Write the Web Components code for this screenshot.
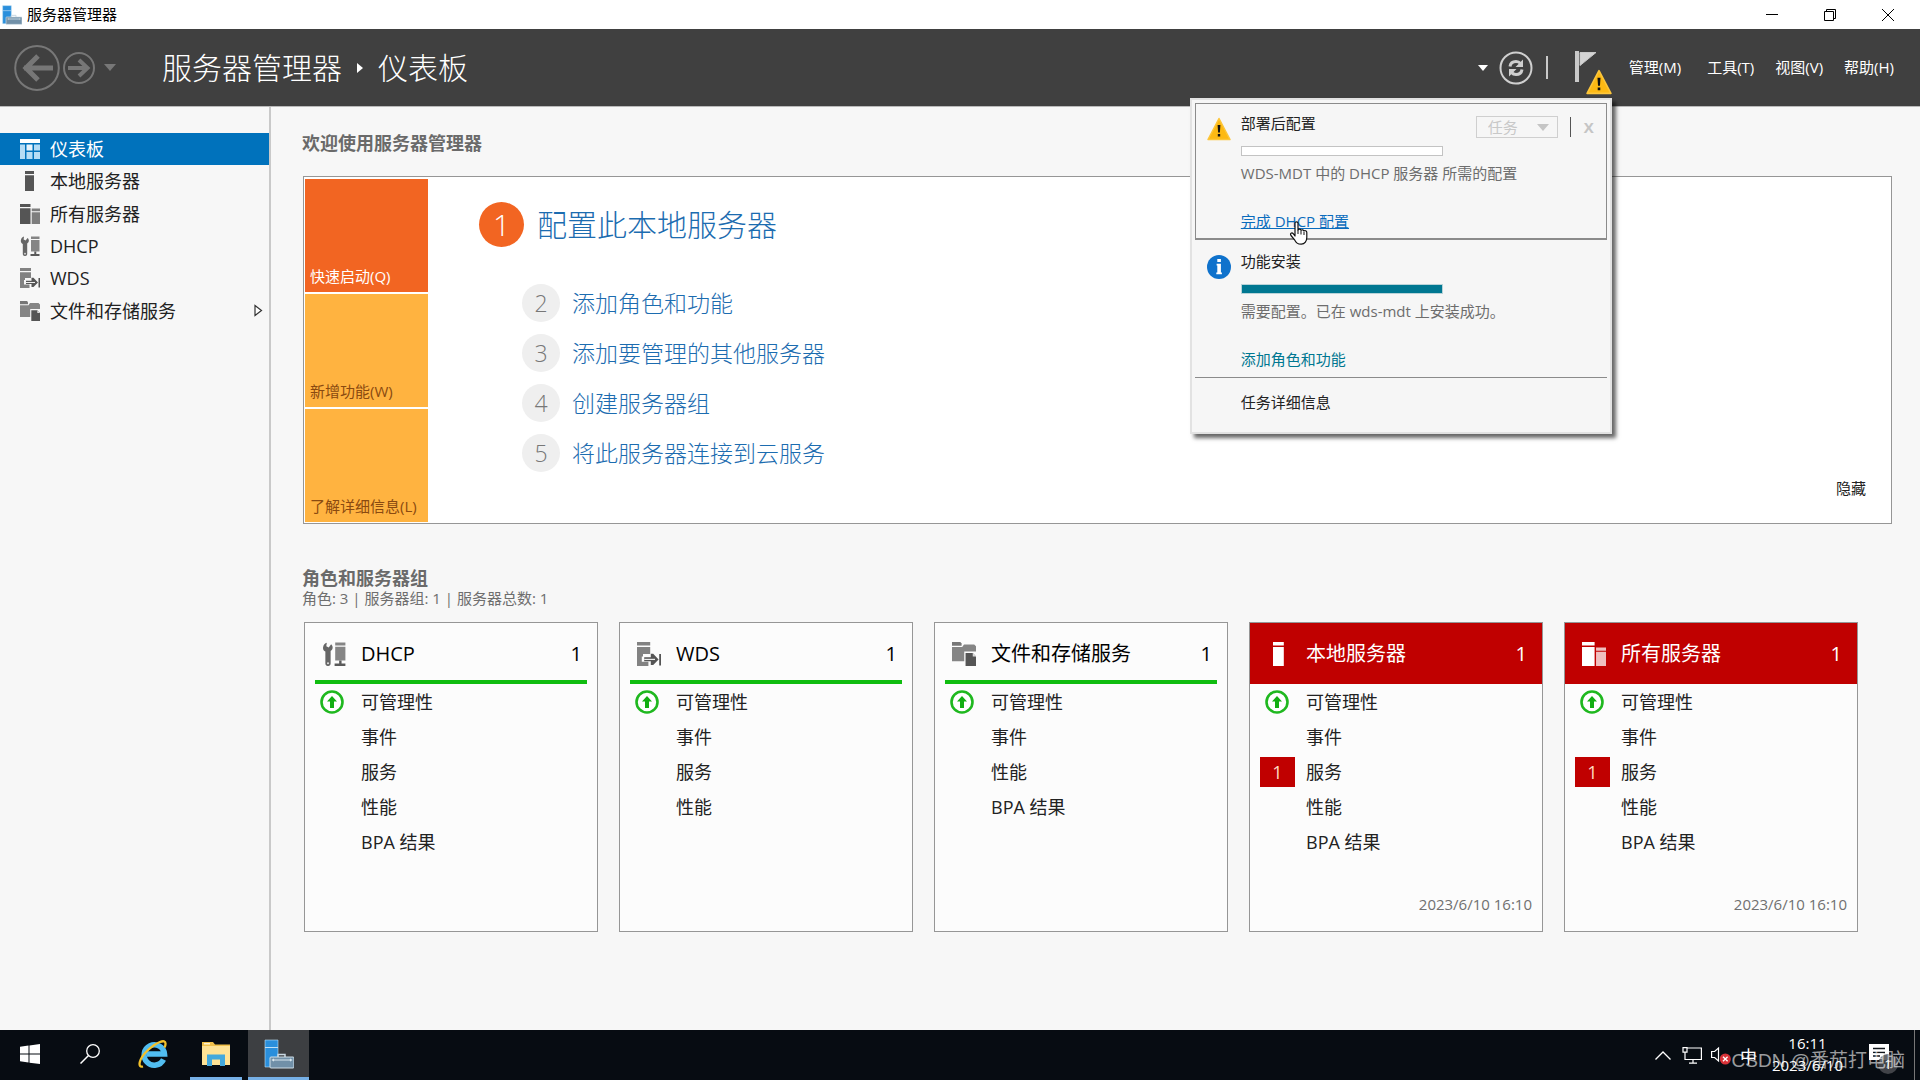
<!DOCTYPE html>
<html lang="zh-CN">
<head>
<meta charset="utf-8">
<title>服务器管理器</title>
<style>
  html, body { margin: 0; height: 100%; }
  body { font-family: "Open Sans", "Noto Sans CJK SC", sans-serif; background: #f7f7f7; color: #222; overflow: hidden; }
</style>
</head>
<body>
<sm-app></sm-app>
<script>
const BASE = `
  * { box-sizing: border-box; }
  a { color: inherit; text-decoration: none; }
  ul, ol { list-style: none; margin: 0; padding: 0; }
  h1, h2, p { margin: 0; font-weight: 400; }
  button, select { font: inherit; color: inherit; background: none; border: 0; padding: 0; margin: 0; border-radius: 0; }
`;
function define(name, render) {
  customElements.define(name, class extends HTMLElement {
    constructor() { super(); this.attachShadow({ mode: 'open' }); }
    connectedCallback() {
      const t = document.createElement('template');
      const [css, html] = render(this);
      t.innerHTML = `<style>${BASE}${css}</style>${html}`;
      this.shadowRoot.replaceChildren(t.content.cloneNode(true));
    }
  });
}

const ICONS = {
  app: [30, 30, `<path fill="#2a8fdc" stroke="#bfe0f6" stroke-width=".6" d="M1 1h13v27H1z"/><path stroke="#bfe0f6" d="M1 8.500h13"/><path fill="none" stroke="#c9d8e2" stroke-width="1.500" d="M14 18v-2.500h7V18"/><rect x="6" y="18" width="24" height="11" rx="1" fill="#7190a8" stroke="#cfdde6"/><path stroke="#d9e6ee" stroke-width="1.200" d="M9 21h18M10 20l-1.500 1L10 22M26 20l1.500 1L26 22"/>`],
  dash: [20, 20, `<path fill="#fff" d="M0 0h20v4H0z"/><path fill="#b5dcf5" d="M0 5.500h5V20H0z"/><path fill="#e8f4fc" d="M6.500 5.500h6v6h-6z"/><path fill="#b5dcf5" d="M14 5.500h6v6h-6zM6.500 13h6v7h-6zM14 13h6v7h-6z"/>`],
  server: [20, 20, `<path fill="currentColor" d="M5 0h9v3H5zM5 4.200h9V20H5z"/>`],
  servers: [20, 20, `<path fill="currentColor" d="M0 0h10.500v3H0zM0 4.200h10.500V20H0z"/><path fill="currentColor" opacity=".75" d="M11.700 4.600H20v2.600h-8.300zM11.700 8.200H20V20h-8.300z"/>`],
  dhcp: [20, 20, `<path fill="#666" d="M4 .6 3.600 3.500 5.600 4.600 7.600 1.900C9.400 3.400 9.300 6.300 7.200 7.500V18c0 2.700-4.400 2.700-4.400 0V8C1.400 7.400.6 6 .9 4.300 1.200 2.300 2.400 1 4 .6z"/><circle cx="5" cy="17.700" r=".9" fill="#ddd"/><path fill="#858585" d="M11 .500h8.500v2.500H11zM11 4h8.500v11.500H11z"/><path fill="#5a5a5a" d="M14.300 15.500h2V18h3.200v2H10.500v-2h3.800z"/>`],
  wds: [20, 20, `<path fill="#828282" d="M0 0h11v3H0zM0 4.200h11V10H0z"/><path fill="#828282" d="M0 9h5v3H4v4.500h5.500V20H0z"/><path fill="#555" d="M6 12.800h5.500V9.800h2l4.500 4.700-4.500 4.600h-2v-3H6zM18.500 10H20v9.500h-1.500z"/><path stroke="#eee" stroke-width="1" d="M6 14.500h9"/>`],
  files: [20, 20, `<path fill="#777" d="M0 0h7l1 1.200v2H0z"/><path fill="#858585" d="M0 4.200h8.500L10 2h8.500L20 3.500V8h-9.800v8H0z"/><path fill="#555" d="M11.300 9.200h6L20 12v8h-8.700z"/><path fill="#ddd" d="M17.300 9.200 20 12h-2.700z"/>`],
  up: [24, 24, `<circle cx="12" cy="12" r="10.500" fill="#fff" stroke="#1fb81f" stroke-width="2.600"/><path fill="#12ae12" d="M12 6l5 5.500h-3V18h-4v-6.500H7z"/>`],
  warn: [24, 24, `<path fill="#fdb913" stroke="#fdc63a" stroke-width="1.500" stroke-linejoin="round" d="M12 1.500 23 22.500H1z"/><path fill="#111" d="M10.600 8h2.800l-.5 7.500h-1.800zM10.800 17h2.400v2.500h-2.400z"/>`],
  info: [24, 24, `<circle cx="12" cy="12" r="12" fill="#0f72cc"/><path fill="#fff" d="M10.300 4h3.600v3h-3.600zM9.600 8.800h4.300v8.700h1v1.800H9.300v-1.800h1v-6.900h-.7z"/>`],
  back: [46, 48, `<ellipse cx="23" cy="24" rx="21.800" ry="22" fill="none" stroke="#777" stroke-width="2"/><path fill="none" stroke="#777" stroke-width="5" d="M10 24h29M24 12 12 24l12 12"/>`],
  fwd: [32, 32, `<circle cx="16" cy="16" r="15" fill="none" stroke="#777" stroke-width="2"/><path fill="none" stroke="#777" stroke-width="4" d="M5 16h20M16 8l8.500 8L16 24"/>`],
  refresh: [34, 34, `<circle cx="17" cy="17" r="15.500" fill="none" stroke="#cfcfcf" stroke-width="2"/><path fill="none" stroke="#cfcfcf" stroke-width="3" d="M11 15.500c.5-3.500 2.500-5 6-5 2 0 3.300.6 4.500 2M23 18.500c-.5 3.500-2.500 5-6 5-2 0-3.300-.6-4.500-2"/><path fill="#cfcfcf" d="M24 8.500v7.500h-7.500zM10 25.500V18h7.500z"/>`],
  flag: [24, 31, `<path fill="#c9c9c9" d="M1 0h4v31H1z"/><path fill="#d4d4d4" stroke="#c9c9c9" d="M6 1.500h16L6 14.500z"/><path stroke="#777" d="M5.500 3v10"/>`],
  down: [12, 7, `<path fill="currentColor" d="M0 0h12L6 7z"/>`],
  crumb: [6, 10, `<path fill="#fff" d="M0 0v10l6-5z"/>`],
  tri: [9, 13, `<path fill="#fff" stroke="#333" stroke-width="1.200" d="M1 1.500v10l6.500-5z"/>`],
  min: [12, 12, `<path stroke="#000" d="M0 5.500h12"/>`],
  max: [12, 12, `<path fill="none" stroke="#000" d="M.5 2.500h9v9h-9zM2.500 2V.500h9v9H10"/>`],
  close: [12, 12, `<path stroke="#000" d="M0 0l12 12M12 0 0 12"/>`],
  win: [20, 20, `<path fill="#fff" d="M0 2.800 8.500 1.600v8H0zM9.500 1.400 20 0v9.600H9.500zM0 10.500h8.500v8L0 17.300zM9.500 10.500H20V20L9.500 18.700z"/>`],
  search: [20, 20, `<circle cx="13" cy="7" r="6.300" fill="none" stroke="#fff" stroke-width="1.300"/><path stroke="#fff" stroke-width="1.500" d="M8.500 11.500.5 19.500"/>`],
  ie: [30, 30, `<path fill="none" stroke="#51bdf0" stroke-width="5.500" d="M25.500 20.500a10.200 10.200 0 1 1 1-5.500H9"/><path fill="none" stroke="#f3c22b" stroke-width="2.300" d="M5 27.500c-6 1.500-4-8 4.500-16S28-1 27.500 5c0 1-.3 2.300-1 3.500"/>`],
  folder: [28, 24, `<path fill="#f2c14b" d="M0 0h11l2 2.500h15V6H0z"/><path fill="#ffe395" d="M0 4h28v19H0z"/><path fill="#fff4cf" d="M2 1h6v1.500H2z"/><path fill="#43a9dc" d="M5 24V12.500h18V24h-5v-6.500h-8V24z"/>`],
  chev: [16, 9, `<path fill="none" stroke="#fff" stroke-width="1.300" d="m.5 8.500 7.500-7.500 7.500 7.500"/>`],
  net: [20, 17, `<path fill="none" stroke="#fff" stroke-width="1.200" d="M5 1h14.400v11.500H3V7M11 12.500V16M7 16.200h8M1 .600h4v4.500H1zM3 5v3"/>`],
  mute: [20, 20, `<path fill="none" stroke="#fff" stroke-width="1.200" d="M.6 6.500h3L7.500 3v13l-3.900-3.500h-3z"/><circle cx="14.300" cy="14" r="5.500" fill="#d83238"/><path stroke="#fff" stroke-width="1.300" d="m12 11.700 4.600 4.600m0-4.600L12 16.300"/>`],
  note: [20, 19, `<path fill="#fff" d="M0 0h20v16h-6l-3 3v-3H0z"/><path stroke="#10151b" stroke-width="1.400" d="M4 4.500h12M4 8.500h12M4 12h7"/>`],
  hand: [19, 24, `<path fill="#fff" stroke="#111" stroke-width="1.200" stroke-linejoin="round" d="M6 15V2.300C6 .300 9 .300 9 2.300V9c.5-1.300 2.700-1.200 3 .4.6-1 2.600-.8 2.800.6.900-.8 3-.3 3 1.500v5c0 3.500-2 6.700-5.500 6.700-4 0-5-1.500-6.500-4L2 14.500c-1.500-2.300 1-3.300 2.200-1.800z"/><path stroke="#111" d="M9 9v4M12 10v3.500M15 11v3"/>`]
};
define('sm-icon', el => {
  const [w, h, body] = ICONS[el.getAttribute('name')];
  const size = +el.getAttribute('width') || w;
  return [`:host { display: inline-block; flex: none; line-height: 0; } svg { display: block; }`,
    `<svg width="${size}" height="${Math.round(size * h / w)}" viewBox="0 0 ${w} ${h}" aria-hidden="true">${body}</svg>`];
});

define('sm-titlebar', () => [`
  :host { display: flex; align-items: center; height: 29px; flex: none; background: #fff; color: #000; padding: 0 3px 0 2px; font-size: 15px; }
  span { margin-left: 5px; line-height: 20px; padding-bottom: 2px; }
  nav { margin-left: auto; display: flex; align-self: stretch; }
  button { width: 58px; display: grid; place-items: center; }
`, `<sm-icon name="app" width="20"></sm-icon><span>服务器管理器</span>
  <nav><button aria-label="最小化"><sm-icon name="min"></sm-icon></button><button aria-label="还原"><sm-icon name="max"></sm-icon></button><button aria-label="关闭"><sm-icon name="close"></sm-icon></button></nav>`]);

define('sm-task', el => {
  const warn = el.hasAttribute('active');
  return [`
  :host { display: flex; height: 137px; padding: 10px 11px 0; border: 1px solid transparent; font-size: 15px; line-height: 20px; }
  :host([active]) { border-color: #8b8b8b; border-bottom-width: 2px; padding-top: 9px; }
  .body { flex: 1; min-width: 0; margin-left: 10px; display: flex; flex-direction: column; color: #6d6d6d; }
  .icon { margin-top: 4px; height: 24px; }
  .bar { width: 202px; height: 10px; border: 1px solid #c3c3c3; background: #fff; margin: 13px 0 7px; }
  .bar.full { background: #007791; border-color: #b9d3d8; }
  .title { color: #222; }
  .link { margin-top: 28px; }
  .tools { display: flex; align-items: center; gap: 12px; color: #c5c5c5; height: 22px; margin-top: 3px; }
  .pick { position: relative; display: flex; }
  .pick sm-icon { position: absolute; right: 9px; top: 8px; pointer-events: none; }
  select { appearance: none; width: 82px; height: 22px; border: 1px solid #cfcfcf; padding-left: 11px; color: #c8c8c8; opacity: 1; line-height: 20px; }
  i { width: 1px; height: 20px; background: #555; }
  .x { font-weight: 700; width: 12px; }
  `, `<sm-icon class="icon" name="${warn ? 'warn' : 'info'}"></sm-icon>
  <div class="body"><div class="title"><slot name="title"></slot></div><div class="bar${warn ? '' : ' full'}" role="progressbar" aria-label="进度"></div><slot name="text"></slot><div class="link"><slot name="link"></slot></div></div>
  ${warn ? `<div class="tools"><div class="pick"><select aria-label="任务" disabled><option>任务</option></select><sm-icon name="down"></sm-icon></div><i></i><button class="x" aria-label="关闭">X</button></div>` : ''}`];
});

define('sm-notices', () => [`
  :host { display: block; width: 422px; background: #f6f6f6; border: 2px solid #e2e2e2; padding: 3px; box-shadow: 4px 4px 4px rgba(0,0,0,.6); white-space: nowrap; color: #222; }
  .details { display: block; border-top: 1px solid #8b8b8b; padding: 14px 0 17px 46px; font-size: 15px; line-height: 20px; }
  .link { color: #007791; }
  .hot { position: relative; }
  .hot a { color: #0a6cbd; text-decoration: underline; }
  .hot sm-icon { position: absolute; left: 48px; top: 10px; z-index: 1; }
`, `<sm-task active><span slot="title">部署后配置</span><span slot="text">WDS-MDT 中的 DHCP 服务器 所需的配置</span><span slot="link" class="hot"><a href="#dhcp">完成 DHCP 配置</a><sm-icon name="hand"></sm-icon></span></sm-task>
  <sm-task><span slot="title">功能安装</span><span slot="text">需要配置。已在 wds-mdt 上安装成功。</span><a slot="link" class="link" href="#roles">添加角色和功能</a></sm-task>
  <a class="details" href="#details">任务详细信息</a>`]);

define('sm-header', () => [`
  :host { display: flex; align-items: center; height: 78px; flex: none; background: #404040; color: #fff; border-bottom: 1px solid #b9b9b9; padding: 0 26px 0 14px; }
  button { display: grid; place-items: center; }
  .nav { display: flex; align-items: center; gap: 3px; color: #777; }
  .nav .more { margin-left: 6px; }
  h1 { display: flex; align-items: center; gap: 15px; margin-left: 46px; font-size: 30px; line-height: 40px; font-weight: 300; }
  .right { margin-left: auto; display: flex; align-items: center; font-size: 15px; line-height: 20px; }
  .right i { width: 2px; height: 23px; background: #c9c9c9; margin: 0 26px 0 13px; }
  .drop { width: 10px; margin-right: 11px; }
  .flag { position: relative; width: 38px; height: 34px; margin-right: 17px; }
  .flag .warn { position: absolute; left: 12px; top: 18px; }
  sm-notices { position: absolute; right: 0; top: 47px; z-index: 5; }
  menu { display: flex; gap: 21px; margin: 0; padding: 0 0 2px; }
  menu button:first-child { margin-right: 5px; }
`, `<div class="nav"><button aria-label="后退"><sm-icon name="back"></sm-icon></button><button aria-label="前进"><sm-icon name="fwd"></sm-icon></button><button class="more" aria-label="历史"><sm-icon name="down"></sm-icon></button></div>
  <h1><span>服务器管理器</span><sm-icon name="crumb"></sm-icon><span>仪表板</span></h1>
  <div class="right"><button class="drop" aria-label="更多"><sm-icon name="down" width="10"></sm-icon></button><button aria-label="刷新"><sm-icon name="refresh"></sm-icon></button><i></i>
  <div class="flag"><button aria-label="通知"><sm-icon name="flag"></sm-icon><sm-icon class="warn" name="warn" width="26"></sm-icon></button><sm-notices></sm-notices></div>
  <menu><button>管理(M)</button><button>工具(T)</button><button>视图(V)</button><button>帮助(H)</button></menu></div>`]);

const NAV = [['dash', '仪表板'], ['server', '本地服务器'], ['servers', '所有服务器'], ['dhcp', 'DHCP'], ['wds', 'WDS'], ['files', '文件和存储服务']];
define('sm-sidebar', () => [`
  :host { display: block; width: 271px; flex: none; border-right: 2px solid #c9c9c9; padding-top: 26px; background: #f7f7f7; }
  ul { display: grid; grid-template-rows: repeat(6, 1fr); height: 194px; }
  a { display: flex; align-items: center; gap: 10px; height: 100%; padding: 0 6px 0 20px; font-size: 18px; line-height: 24px; }
  a > sm-icon:first-child { color: #555; }
  a[aria-current] { background: #0072bc; color: #fff; }
  .tri { margin-left: auto; }
`, `<ul>${NAV.map(([i, t], n) => `<li><a href="#${i}"${n ? '' : ' aria-current="page"'}><sm-icon name="${i}"></sm-icon><span>${t}</span>${n === 5 ? '<sm-icon class="tri" name="tri"></sm-icon>' : ''}</a></li>`).join('')}</ul>`]);

define('sm-welcome', () => [`
  :host { display: flex; background: #fff; border: 1px solid #969696; padding: 2px 20px 1px 1px; }
  .tiles { display: flex; flex-direction: column; gap: 2px; width: 123px; font-size: 15px; line-height: 20px; }
  .tiles button { height: 113px; display: flex; align-items: flex-end; padding: 0 0 6px 5px; background: #ffb340; color: #8a4a10; }
  .tiles button:first-child { background: #f26522; color: #fff; }
  .steps { margin: 23px 0 0 51px; color: #1c6cb0; font-weight: 300; flex: 1; }
  .steps a { display: flex; align-items: center; }
  b { font-weight: 300; display: grid; place-items: center; border-radius: 50%; width: 38px; height: 38px; background: #efefef; color: #777; }
  .first { font-size: 30px; line-height: 44px; gap: 13px; }
  .first b { width: 45px; height: 45px; background: #f26522; color: #fff; }
  ol { margin: 37px 0 0 43px; display: flex; flex-direction: column; gap: 12px; }
  ol a { font-size: 23px; line-height: 38px; gap: 12px; }
  .hide { align-self: flex-end; font-size: 15px; line-height: 20px; margin: 0 5px 24px 0; }
`, `<div class="tiles"><button>快速启动(Q)</button><button>新增功能(W)</button><button>了解详细信息(L)</button></div>
  <div class="steps"><a class="first" href="#local"><b>1</b><span>配置此本地服务器</span></a>
  <ol>${['添加角色和功能', '添加要管理的其他服务器', '创建服务器组', '将此服务器连接到云服务'].map((t, i) => `<li><a href="#s${i}"><b>${i + 2}</b><span>${t}</span></a></li>`).join('')}</ol></div>
  <button class="hide">隐藏</button>`]);

define('sm-card', el => {
  const alert = el.hasAttribute('alert');
  const rows = el.getAttribute('rows').split(',');
  return [`
  :host { display: flex; flex-direction: column; flex: 0 0 294px; height: 310px; border: 1px solid #969696; background: #fcfcfc; }
  header { display: flex; align-items: center; height: 61px; margin: 0 10px; border-bottom: 4px solid #10bd10; padding: 4px 5px 0 7px; font-size: 20px; line-height: 28px; color: #000; }
  :host([alert]) header { background: #c00000; color: #fff; margin: 0; padding: 1px 15px 0 17px; border: 0; }
  header sm-icon { width: 24px; margin-right: 15px; }
  header h2 { font-size: 20px; flex: 1; }
  li { display: flex; align-items: center; height: 35px; padding-left: 10px; font-size: 18px; line-height: 24px; }
  .mark { width: 35px; height: 30px; display: grid; place-items: center; margin-right: 11px; }
  .mark.ok { padding-right: 2px; }
  .mark.n { background: #c00000; color: #ffd9c0; }
  time { margin: auto 10px 17px auto; font-size: 15px; line-height: 20px; color: #707070; }
  `, `<header><sm-icon name="${el.getAttribute('icon')}" width="24"></sm-icon><h2><slot></slot></h2><span>1</span></header>
  <ul>${rows.map((r, i) => `<li>${i === 0 ? '<span class="mark ok"><sm-icon name="up"></sm-icon></span>' : alert && r === '服务' ? '<span class="mark n">1</span>' : '<span class="mark"></span>'}<a href="#r">${r}</a></li>`).join('')}</ul>
  ${alert ? '<time>2023/6/10 16:10</time>' : ''}`];
});

define('sm-dashboard', () => [`
  :host { display: block; flex: 1; min-width: 0; padding: 24px 28px 0 31px; background: #f7f7f7; }
  h2 { font-size: 18px; line-height: 24px; font-weight: 700; color: #6a6a6a; }
  sm-welcome { margin: 21px 0 44px 1px; }
  .groups h2 { line-height: 20px; }
  p { font-size: 15px; line-height: 20px; color: #6e6e6e; }
  .cards { display: flex; gap: 21px; margin: 14px 0 0 2px; }
`, `<h2>欢迎使用服务器管理器</h2><sm-welcome></sm-welcome>
  <section class="groups"><h2>角色和服务器组</h2><p>角色: 3 | 服务器组: 1 | 服务器总数: 1</p>
  <div class="cards">
    <sm-card icon="dhcp" rows="可管理性,事件,服务,性能,BPA 结果">DHCP</sm-card>
    <sm-card icon="wds" rows="可管理性,事件,服务,性能">WDS</sm-card>
    <sm-card icon="files" rows="可管理性,事件,性能,BPA 结果">文件和存储服务</sm-card>
    <sm-card alert icon="server" rows="可管理性,事件,服务,性能,BPA 结果">本地服务器</sm-card>
    <sm-card alert icon="servers" rows="可管理性,事件,服务,性能,BPA 结果">所有服务器</sm-card>
  </div></section>`]);

define('sm-taskbar', () => [`
  :host { display: flex; height: 50px; flex: none; background: #070c12; color: #fff; position: relative; font-size: 15px; }
  button { display: grid; place-items: center; }
  .apps { display: flex; }
  .apps button { width: 60px; border-bottom: 3px solid transparent; }
  .apps button:nth-child(3) { margin-left: 3px; }
  .apps .run { width: 52px; border-color: #76b0e6; margin: 0 6px 0 7px; }
  .apps .on { background: #3d3f42; border-color: #76b0e6; width: 61px; }
  .tray { margin-left: auto; display: flex; align-items: center; gap: 9px; padding-right: 5px; }
  .tray > sm-icon:first-child { margin-right: 2px; }
  .clock { text-align: center; line-height: 22px; padding: 0 17px 2px 6px; }
  .ime { font-size: 17px; }
  .note { position: relative; margin-right: 16px; }
  .count { position: absolute; left: 9px; top: 10px; width: 20px; height: 20px; border-radius: 50%; background: rgba(75,78,82,.85); font-size: 13px; display: grid; place-items: center; line-height: 20px; }
  .edge { width: 1px; align-self: stretch; background: #777; }
  .mark { position: absolute; right: 15px; top: 17px; font: 19px/28px "Liberation Sans", "Noto Sans CJK SC", sans-serif; color: rgba(255,255,255,.6); }
`, `<div class="apps"><button aria-label="开始"><sm-icon name="win"></sm-icon></button><button aria-label="搜索"><sm-icon name="search"></sm-icon></button><button aria-label="Internet Explorer"><sm-icon name="ie"></sm-icon></button><button class="run" aria-label="文件资源管理器"><sm-icon name="folder"></sm-icon></button><button class="on" aria-label="服务器管理器"><sm-icon name="app"></sm-icon></button></div>
  <div class="tray"><sm-icon name="chev"></sm-icon><sm-icon name="net"></sm-icon><sm-icon name="mute"></sm-icon><span class="ime">中</span>
  <div class="clock"><div>16:11</div><div>2023/6/10</div></div>
  <div class="note"><sm-icon name="note"></sm-icon><span class="count">1</span></div><span class="edge"></span></div>
  <span class="mark">CSDN @番茄打电脑</span>`]);

define('sm-app', () => [`
  :host { display: flex; flex-direction: column; height: 100vh; }
  main { display: flex; flex: 1; min-height: 0; }
  sm-header { position: relative; z-index: 2; }
`, `<sm-titlebar></sm-titlebar><sm-header></sm-header><main><sm-sidebar></sm-sidebar><sm-dashboard></sm-dashboard></main><sm-taskbar></sm-taskbar>`]);
</script>
</body>
</html>
